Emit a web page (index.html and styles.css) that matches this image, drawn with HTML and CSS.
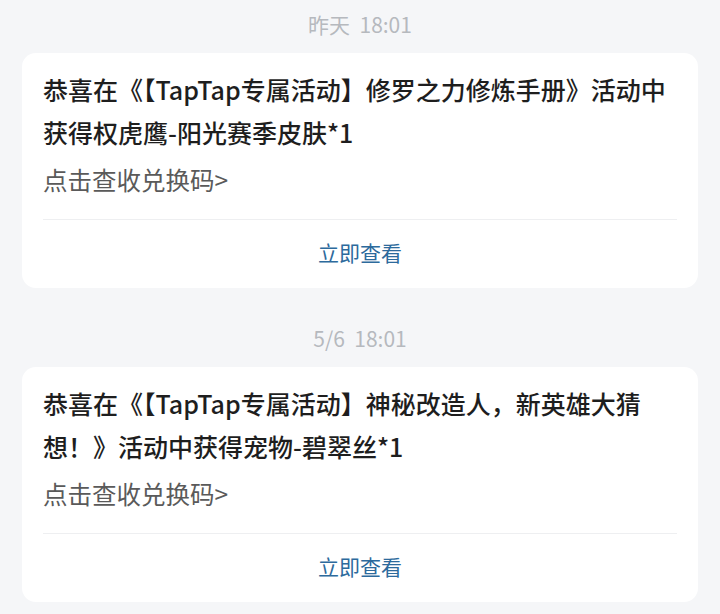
FILE: index.html
```html
<!DOCTYPE html>
<html lang="zh-CN">
<head>
<meta charset="utf-8">
<link rel="stylesheet" href="styles.css">
</head>
<body>
<div class="list">
  <div class="item">
    <div class="time">昨天&nbsp;&nbsp;18:01</div>
    <div class="card">
      <div class="title">恭喜在《【TapTap专属活动】修罗之力修炼手册》活动中获得权虎鹰-阳光赛季皮肤*1</div>
      <div class="link">点击查收兑换码&gt;</div>
      <div class="divider"></div>
      <div class="action">立即查看</div>
    </div>
  </div>
  <div class="item">
    <div class="time">5/6&nbsp;&nbsp;18:01</div>
    <div class="card">
      <div class="title">恭喜在《【TapTap专属活动】神秘改造人，新英雄大猜想！》活动中获得宠物-碧翠丝*1</div>
      <div class="link">点击查收兑换码&gt;</div>
      <div class="divider"></div>
      <div class="action">立即查看</div>
    </div>
  </div>
</div>
</body>
</html>
```
FILE: styles.css
```css
html, body {
  margin: 0;
  padding: 0;
  background: #f5f6f8;
  font-family: "Noto Sans CJK SC", "Noto Sans", sans-serif;
}
.list {
  display: flex;
  flex-direction: column;
  gap: 21px;
  margin-top: -5px;
}
.time {
  height: 58px;
  line-height: 58px;
  text-align: center;
  font-size: 21px;
  color: #b6b9be;
}
.card {
  margin: 0 22px;
  background: #fff;
  border-radius: 14px;
  padding: 15px 21px 4px;
}
.title {
  font-size: 25px;
  line-height: 43px;
  font-weight: 500;
  color: #1e1e1e;
}
.link {
  margin-top: 6px;
  font-size: 24.5px;
  line-height: 40px;
  color: #5a5a5a;
}
.divider {
  margin-top: 19px;
  height: 1px;
  background: #eeeff1;
}
.action {
  height: 64px;
  line-height: 64px;
  text-align: center;
  font-size: 21px;
  color: #2d6a9c;
}
```
